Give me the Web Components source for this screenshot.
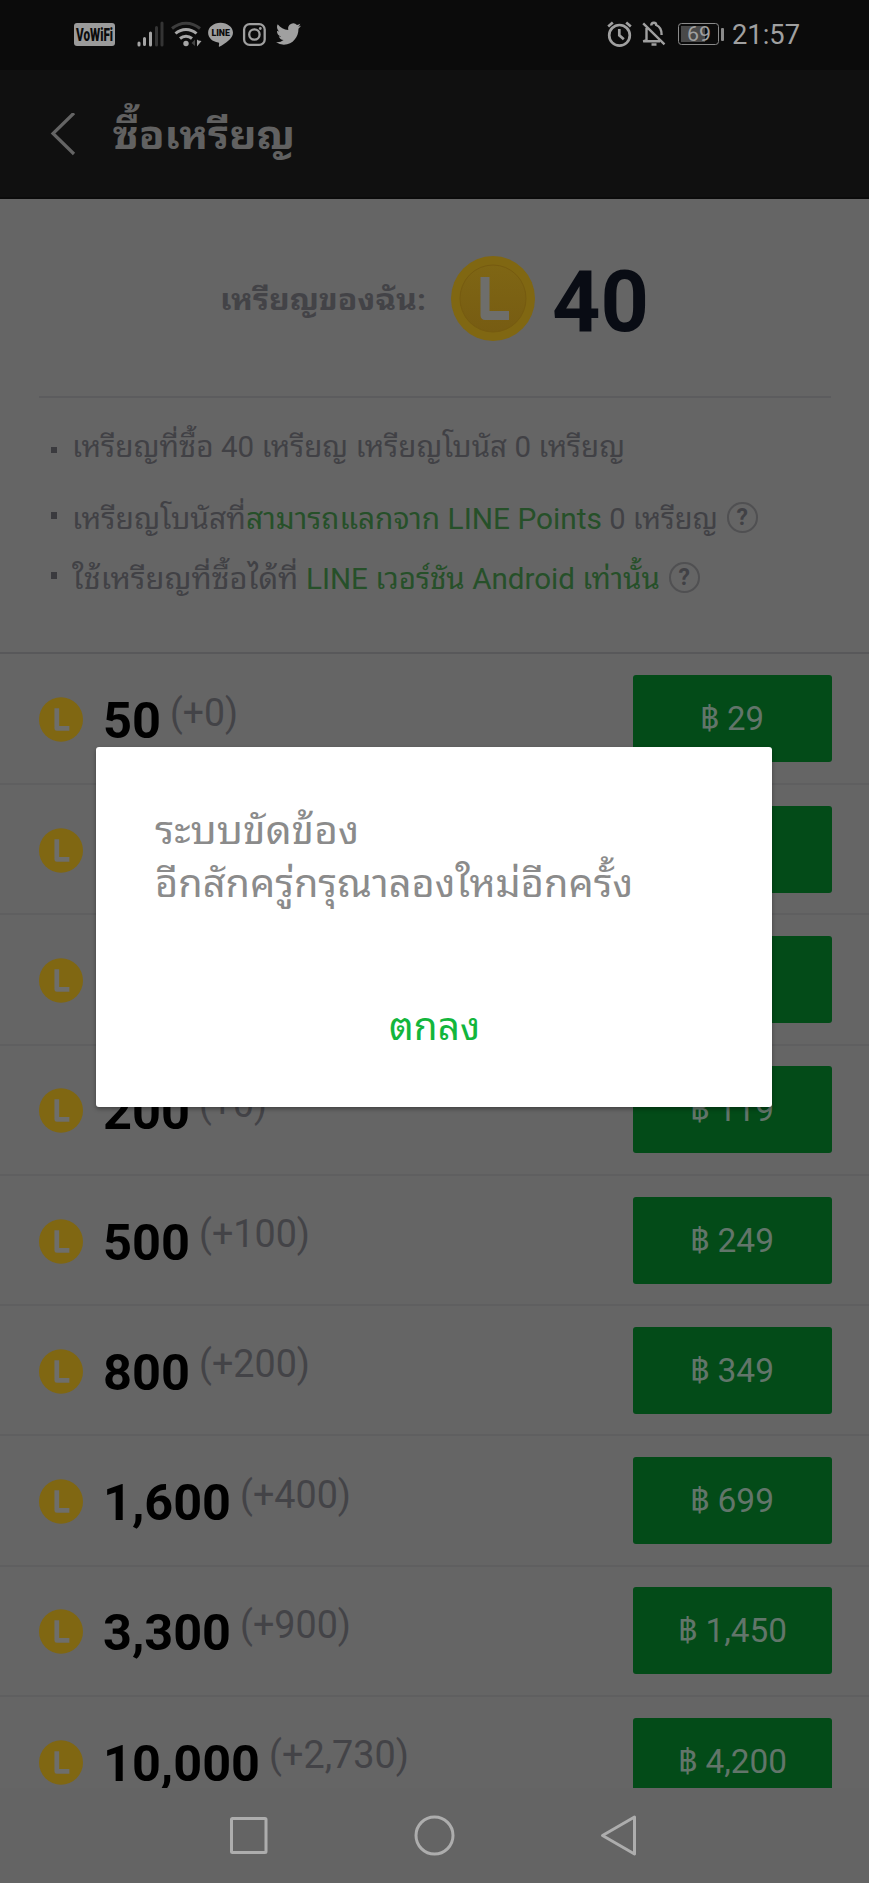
<!DOCTYPE html>
<html lang="th">
<head>
<meta charset="utf-8">
<title>ซื้อเหรียญ</title>
<style>
html,body{margin:0;padding:0}
body{width:869px;height:1883px;overflow:hidden;background:#656565;font-family:Roboto,"Noto Sans Thai Looped","Noto Sans",sans-serif}
</style>
</head>
<body>
<coin-shop></coin-shop>
<script>
const define = (name, html, after) => customElements.define(name, class extends HTMLElement {
  connectedCallback() {
    if (this.shadowRoot) return;
    const root = this.attachShadow({ mode: 'open' });
    root.innerHTML = html;
    if (after) after.call(this, root);
  }
});

define('coin-icon', `<style>:host{display:block;width:44px;height:45px;flex:none}svg{display:block;width:100%;height:100%}:host(:not([large])) .inner{display:none}</style>
<svg viewBox="0 0 84 85"><defs><linearGradient id="g" x1="0" y1="0" x2="0" y2="1"><stop offset="0" stop-color="#7f6614"/><stop offset="1" stop-color="#775c12"/></linearGradient></defs>
<ellipse cx="42" cy="42.5" rx="42" ry="42.5" fill="#806712"/><ellipse class="inner" cx="42" cy="42.5" rx="33" ry="33.5" fill="url(#g)" stroke="#765b10" stroke-width="1"/>
<path d="M34 21v38.500h24" fill="none" stroke="#6e6e6b" stroke-width="9" stroke-linejoin="round"/></svg>`);

define('help-icon', `<style>:host{display:block;width:26.500px;height:26.500px;border:2px solid #505052;border-radius:50%;font:700 23px/27px Roboto,sans-serif;text-align:center;color:#414145}</style>?`);

define('status-bar', `<style>
:host{display:flex;height:69.500px;box-sizing:border-box;padding:21px 71px 0 74px;background:#0b0b0b;color:#a0a0a0}
svg{display:block;flex:none;overflow:visible}
.vo{width:39px;padding-left:2px;height:23.500px;margin-top:1.500px;border-radius:3px;background:#9b9b9b;color:#0b0b0b;font:900 17.500px/24px Roboto,sans-serif}
.bat{display:flex;width:39px;height:20px;border:1.300px solid #8a8a8a;border-radius:3.500px;margin:2px 0 0 12.500px;background:linear-gradient(#494949,#494949) 2px 2px/24px 16px no-repeat;font:400 21px/20.500px Roboto,sans-serif;justify-content:center}
.tip{width:3px;height:13px;background:#8a8a8a;margin:6.500px 0 0 2px;border-radius:1px}
.time{font:400 28px/28px Roboto,sans-serif;margin:0 -1.500px 0 7.500px}
</style>
<div class="vo"><fit-text w="37">VoWiFi</fit-text></div>
<svg style="margin-left:22px" width="27" height="26" stroke-width="3" stroke-linecap="round"><g stroke="#a4a4a4"><path d="M2 22v2M7.500 17.500v6M13.500 12v12"/></g><g stroke="#343434"><path d="M19.500 6.500v17.500M25 2v22"/></g></svg>
<svg style="margin-left:7px" width="31" height="26" fill="none" stroke="#a6a6a6" stroke-width="3"><path stroke="#3d3d3d" d="M1 7.500C9.500.5 20.500.5 29 7.500"/><path d="M4.500 12.500c6-5.500 15-5.500 21 0M9 17.500c3.500-3 8.500-3 12 0"/><circle cx="15" cy="22.500" r="2.700" fill="#a6a6a6" stroke="none"/><path stroke="none" fill="#444" d="M24 18.500v6.500l-3.500-3z"/><path stroke="none" fill="#a6a6a6" d="M26 18.500v7l4.500-5.500-3-.5z"/></svg>
<svg style="margin-left:6px" width="25" height="26"><path fill="#a0a0a0" d="M12.500 1.800C5.700 1.800.1 6.200.1 11.700c0 4.900 4.300 9 10.200 9.800 1.200.3.900 1.200.5 3.500 0 .7.400 1 1 .6 5-2.900 13.200-8 13.200-13.900 0-5.500-5.600-9.900-12.500-9.900z"/><text x="3.400" y="15" textLength="18.500" lengthAdjust="spacingAndGlyphs" font-family="Roboto" font-size="8.500" font-weight="900" fill="#0b0b0b">LINE</text></svg>
<svg style="margin-left:10px" width="23" height="26" fill="none" stroke="#a0a0a0" stroke-width="2.300"><rect x="1.100" y="3.100" width="20.600" height="20.800" rx="5.500"/><circle cx="11.400" cy="13.500" r="5.200"/><circle cx="17.300" cy="7.500" r="1.400" fill="#a0a0a0" stroke="none"/></svg>
<svg style="margin:2px 0 0 10px" width="25" height="22" viewBox="0 2 24 20" preserveAspectRatio="none"><path fill="#a0a0a0" d="M23.953 4.570a10 10 0 01-2.825.775 4.958 4.958 0 002.163-2.723c-.951.555-2.005.959-3.127 1.184a4.920 4.920 0 00-8.384 4.482C7.690 8.095 4.067 6.130 1.640 3.162a4.822 4.822 0 00-.666 2.475c0 1.710.870 3.213 2.188 4.096a4.904 4.904 0 01-2.228-.616v.060a4.923 4.923 0 003.946 4.827 4.996 4.996 0 01-2.212.085 4.936 4.936 0 004.604 3.417 9.867 9.867 0 01-6.102 2.105c-.390 0-.779-.023-1.170-.067a13.995 13.995 0 007.557 2.209c9.053 0 13.998-7.496 13.998-13.985 0-.210 0-.420-.015-.630A9.935 9.935 0 0024 4.590z"/></svg>
<svg style="margin-left:auto" width="25" height="26" fill="none" stroke="#a0a0a0" stroke-width="2.700"><circle cx="12.500" cy="14.300" r="10.300"/><path d="M12.300 8v6.300l4.500 4M1.200 5.500L5.800 1.500M23.800 5.500L19.200 1.500"/></svg>
<svg style="margin-left:10px" width="24" height="26" fill="none" stroke="#a0a0a0" stroke-width="2.400"><path d="M1.200 2.300L22.500 23.300M4.500 7v12L1.200 20.300H18M9.200 4.500C9.500 1 14 1 14.200 4c3.800 1.500 5.500 4.500 5.400 10"/><path d="M9.500 23.500h5" stroke-width="2.500"/></svg>
<div class="bat"><fit-text w="24">69</fit-text></div><div class="tip"></div>
<div class="time"><fit-text w="68">21:57</fit-text></div>`);

define('app-header', `<style>:host{display:flex;height:129px;box-sizing:border-box;background:#101010;border-bottom:2px solid #0b0b0b;padding:0 0 0 50px}
svg{display:block;margin-top:43px;width:26px;height:44px;flex:none}h1{margin:0 0 0 37px;font:700 40px/60px Roboto,"Noto Sans Thai Looped",sans-serif;color:#616161;padding-top:36px}</style>
<svg fill="none" stroke="#646464" stroke-width="3.200"><path d="M24 0L3 20.500l21 20.500"/></svg><h1><slot></slot></h1>`);

define('balance-panel', `<style>:host{display:flex;height:199.500px;margin:0 38px 0 39px;border-bottom:2px solid #5c5c5e;box-sizing:border-box}
.label{font-size:29px;font-weight:700;line-height:50px;color:#434347;margin:76px 0 0 181px;width:206px}
coin-icon{width:84px;height:85px;margin:57.500px 0 0 25px}
.n{font-size:85px;font-weight:700;line-height:100px;color:#090c14;margin:53.500px 0 0 17px}</style>
<div class="label"><fit-text w="206">เหรียญของฉัน:</fit-text></div><coin-icon large></coin-icon><div class="n"><fit-text w="97">40</fit-text></div>`);

define('note-line', `<style>:host{display:flex;height:60px;line-height:60px;font-size:29px;color:#414145}
i{width:6.500px;height:6.500px;background:#3a3a3e;margin:var(--dot,26px) 15px 0 50.500px;flex:none}
::slotted(help-icon){margin:13px 0 0 9px}</style><i></i><slot></slot>`);

define('price-row', `<style>:host{display:flex;height:130.300px;box-sizing:border-box;padding:20.700px 37.500px 0 39px;border-bottom:2px solid #5f5f60}
:host([first]){height:131px;padding-top:21px}
coin-icon{margin-top:22px}
.amt{font-size:50px;font-weight:700;line-height:60px;color:#000;margin:16px 0 0 20px}
.bonus{font-size:38px;line-height:50px;color:#434347;margin:12.500px 0 0 8.500px}
.btn{width:198.500px;height:87px;border-radius:3px;background:#034b18;margin-left:auto;display:flex;justify-content:center;font-size:34px;line-height:86px;color:#62756a}</style>
<coin-icon></coin-icon><div class="amt"></div><div class="bonus"></div><div class="btn"></div>`, function (root) {
  const put = (cls, attr, w) => {
    const text = this.getAttribute(attr);
    if (text) root.querySelector(cls).innerHTML = '<fit-text w="' + w + '">' + text + '</fit-text>';
  };
  const [a, b, p] = (this.getAttribute('widths') || '').split(' ');
  put('.amt', 'amount', a); put('.bonus', 'bonus', b); put('.btn', 'price', p);
});

define('nav-bar', `<style>:host{display:block;height:95px;background:#646464}svg{display:block}</style>
<svg width="869" height="95" fill="none" stroke="#adadad" stroke-width="3" stroke-linejoin="round"><rect x="231.500" y="30.500" width="34.500" height="34" rx="1"/><circle cx="434.500" cy="47.500" r="18.500"/><path d="M634.500 29L602.500 47.500l32 18.500z"/></svg>`);

define('alert-dialog', `<style>:host{position:absolute;left:96px;top:747px;width:676px;height:360px;box-sizing:border-box;padding:57.500px 59px 0;background:#fff;border-radius:3px;box-shadow:0 2px 4px rgba(0,0,0,.35)}
p{margin:0;font-size:38px;line-height:53px;height:53px;color:#8b8b8b}button{display:block;border:0;background:none;padding:0;margin:86.500px auto 0;font:400 38px/60px Roboto,"Noto Sans Thai Looped",sans-serif;color:#12b63c}</style>
<p><fit-text w="204">ระบบขัดข้อง</fit-text></p><p><fit-text w="478">อีกสักครู่กรุณาลองใหม่อีกครั้ง</fit-text></p><button><fit-text w="91">ตกลง</fit-text></button>`);

define('coin-shop', `<style>:host{display:flex;flex-direction:column;width:869px;height:1883px;position:relative;background:#656565}
.notes{height:256px;box-sizing:border-box;border-bottom:2px solid #58585a;flex:none}
.notes note-line{--dot:23px}
.notes note-line:nth-child(1){height:72.500px;margin-top:18.500px;--dot:30px}
.list{flex:1;min-height:0;overflow:hidden}.link{color:#265029}status-bar,app-header,balance-panel,nav-bar{flex:none}</style>
<status-bar></status-bar><app-header><fit-text w="182">ซื้อเหรียญ</fit-text></app-header>
<balance-panel></balance-panel>
<div class="notes">
<note-line><fit-text w="149">เหรียญที่ซื้อ </fit-text><fit-text w="404">40 เหรียญ เหรียญโบนัส 0 เหรียญ</fit-text></note-line>
<note-line><fit-text w="174">เหรียญโบนัสที่</fit-text><fit-text class="link" w="356">สามารถแลกจาก LINE Points</fit-text><fit-text w="116"> 0 เหรียญ</fit-text><help-icon></help-icon></note-line>
<note-line><fit-text w="234">ใช้เหรียญที่ซื้อได้ที่ </fit-text><fit-text class="link" w="354">LINE เวอร์ชัน Android เท่านั้น</fit-text><help-icon></help-icon></note-line>
</div>
<div class="list">
<price-row first amount="50" bonus="(+0)" price="฿ 29" widths="58 68 64"></price-row>
<price-row></price-row><price-row></price-row>
<price-row amount="200" bonus="(+0)" price="฿ 119" widths="87 68 84"></price-row>
<price-row amount="500" bonus="(+100)" price="฿ 249" widths="87 111 84"></price-row>
<price-row amount="800" bonus="(+200)" price="฿ 349" widths="87 111 84"></price-row>
<price-row amount="1,600" bonus="(+400)" price="฿ 699" widths="128 111 84"></price-row>
<price-row amount="3,300" bonus="(+900)" price="฿ 1,450" widths="128 111 109"></price-row>
<price-row amount="10,000" bonus="(+2,730)" price="฿ 4,200" widths="157 140 109"></price-row>
</div>
<nav-bar></nav-bar><alert-dialog></alert-dialog>`);

/* Scales a single line of text horizontally so that it fills the width in its "w" attribute. */
define('fit-text', `<style>:host{display:block;flex:none;white-space:pre}span{display:inline-block;transform-origin:0 50%}</style><span><slot></slot></span>`, function (root) {
  const w = +this.getAttribute('w'), span = root.querySelector('span');
  const natural = span.getBoundingClientRect().width;
  this.style.width = w + 'px';
  if (natural) span.style.transform = 'scaleX(' + w / natural + ')';
});
</script>
</body>
</html>
